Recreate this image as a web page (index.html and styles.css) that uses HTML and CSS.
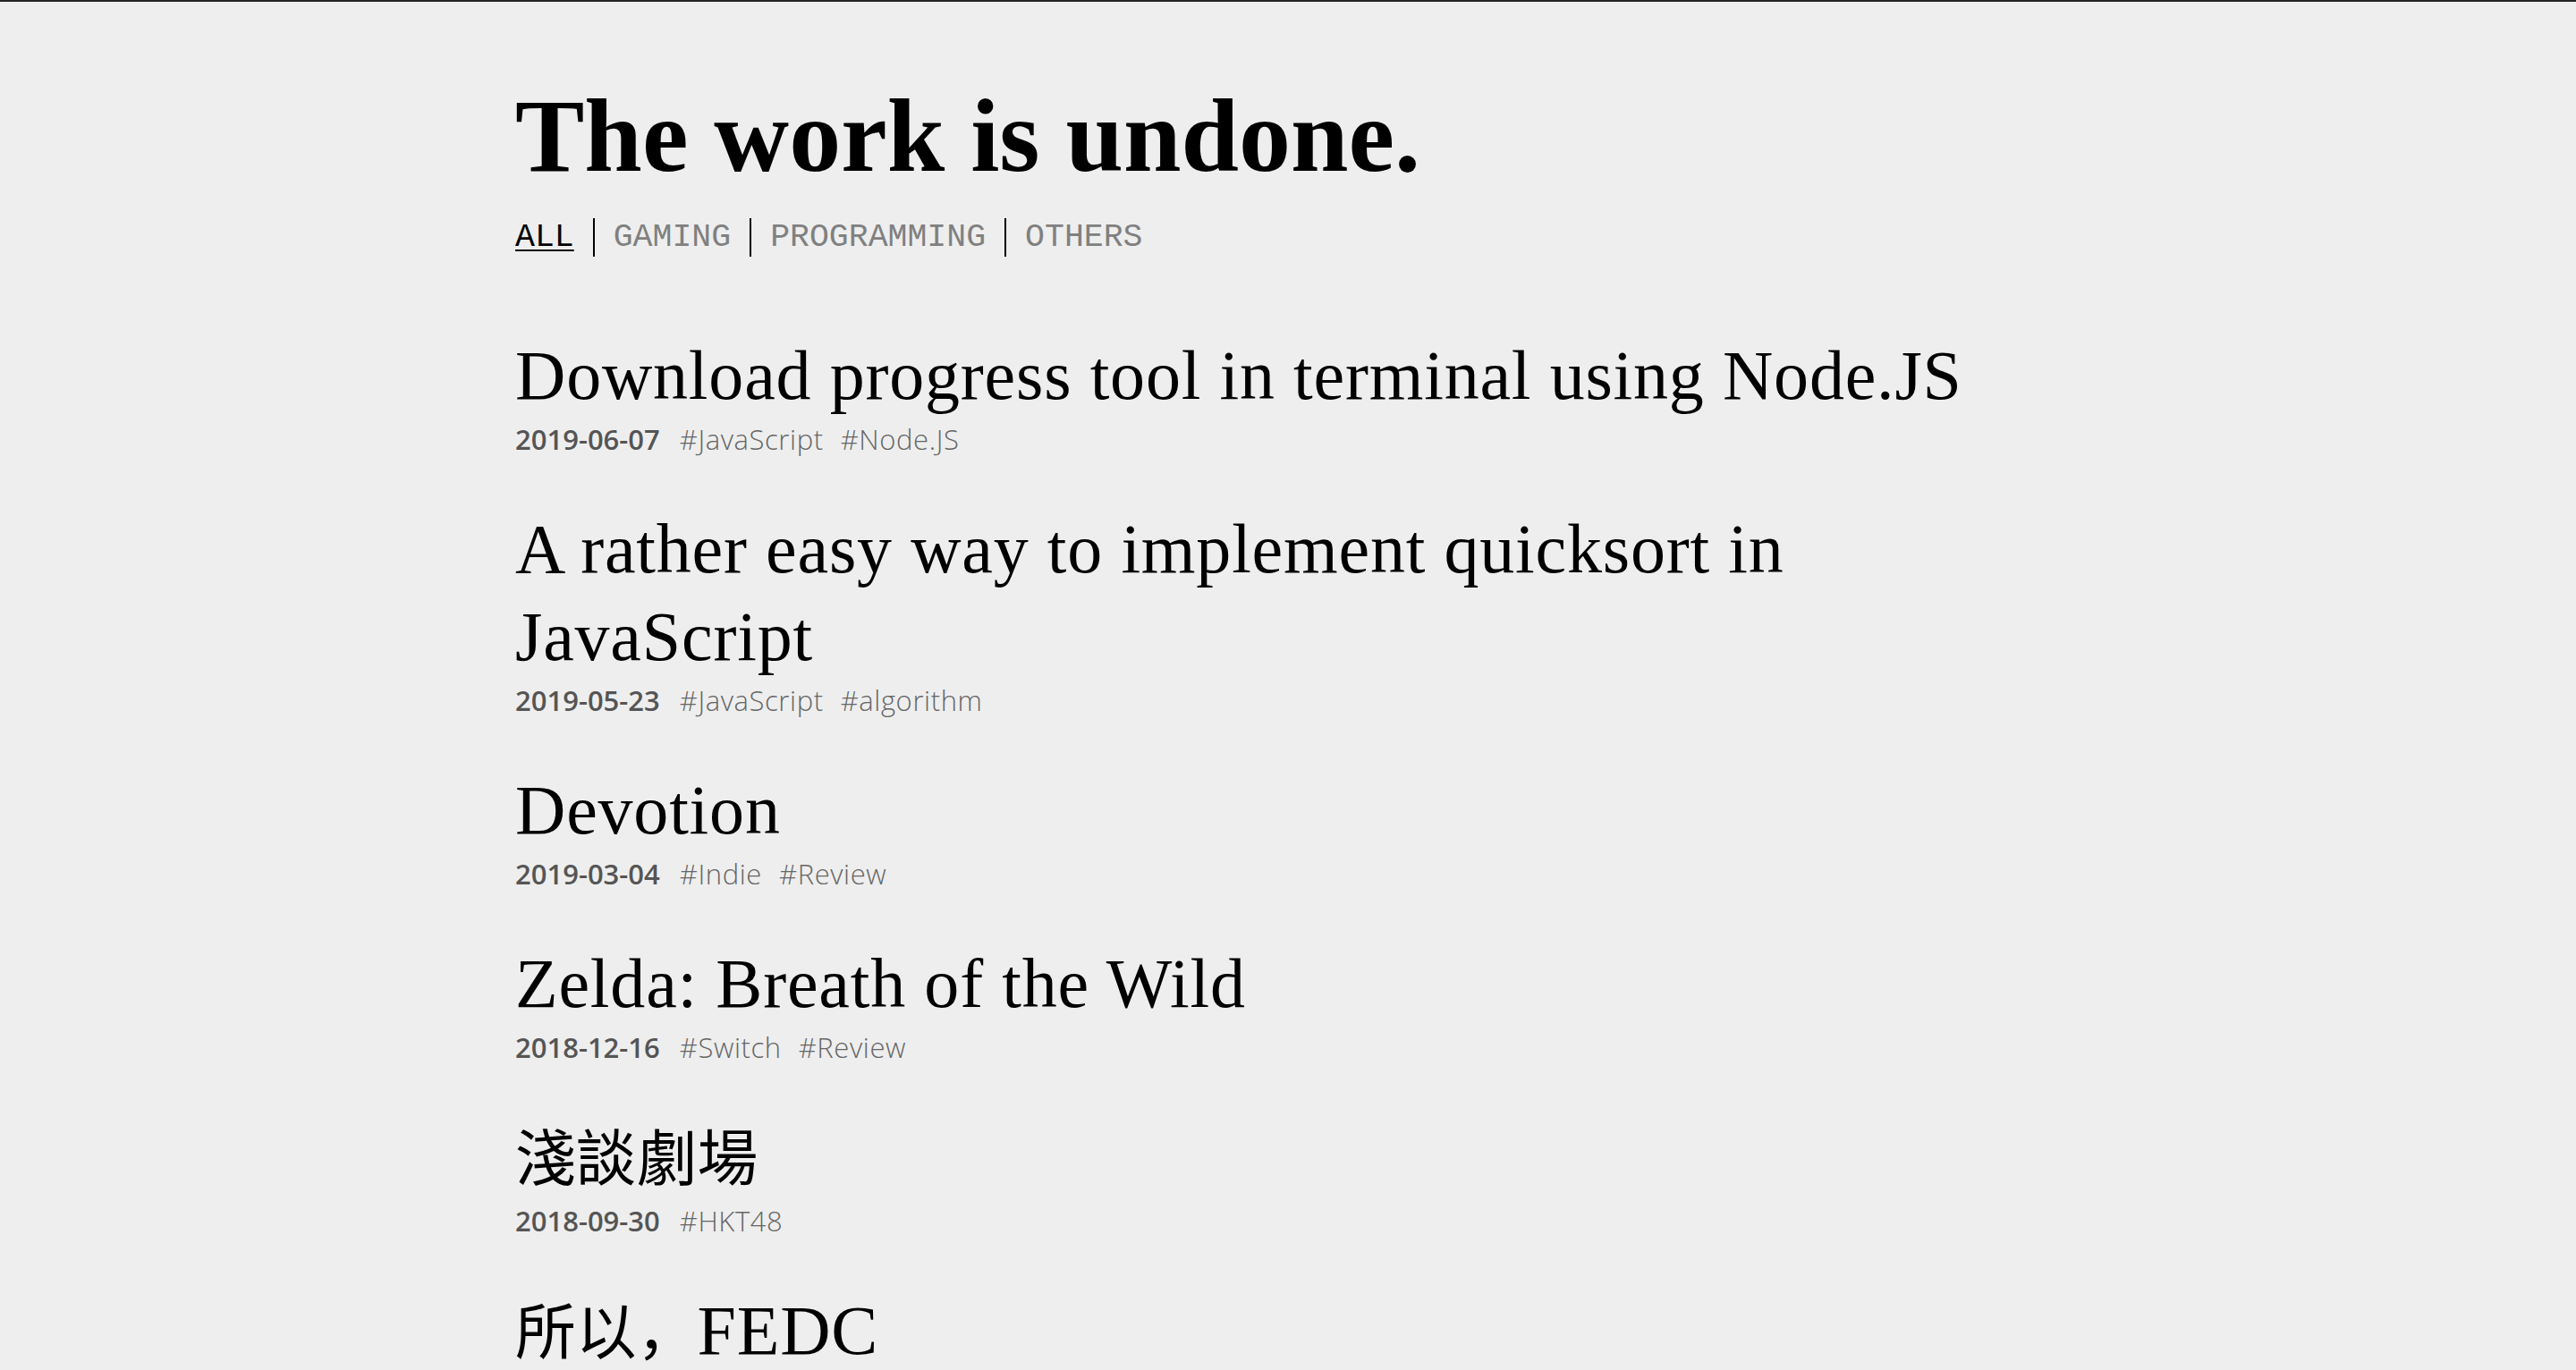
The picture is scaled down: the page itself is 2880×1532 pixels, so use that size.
FILE: index.html
```html
<!DOCTYPE html>
<html lang="en">
<head>
<meta charset="utf-8">
<title>The work is undone.</title>
<link rel="stylesheet" href="styles.css">
</head>
<body>
<div class="page">
  <header class="header">
    <h1 class="site-title">The work is undone.</h1>
    <nav class="nav">
      <a class="nav-item active" href="#">ALL</a><a class="nav-item" href="#">GAMING</a><a class="nav-item" href="#">PROGRAMMING</a><a class="nav-item" href="#">OTHERS</a>
    </nav>
  </header>
  <main class="posts">
    <article class="post">
      <h2 class="post-title">Download progress tool in terminal using Node.JS</h2>
      <div class="meta"><span class="date">2019-06-07</span><span class="tag">#JavaScript</span><span class="tag">#Node.JS</span></div>
    </article>
    <article class="post">
      <h2 class="post-title">A rather easy way to implement quicksort in JavaScript</h2>
      <div class="meta"><span class="date">2019-05-23</span><span class="tag">#JavaScript</span><span class="tag">#algorithm</span></div>
    </article>
    <article class="post">
      <h2 class="post-title">Devotion</h2>
      <div class="meta"><span class="date">2019-03-04</span><span class="tag">#Indie</span><span class="tag">#Review</span></div>
    </article>
    <article class="post">
      <h2 class="post-title">Zelda: Breath of the Wild</h2>
      <div class="meta"><span class="date">2018-12-16</span><span class="tag">#Switch</span><span class="tag">#Review</span></div>
    </article>
    <article class="post">
      <h2 class="post-title"><span class="cjk" lang="zh-Hant">淺談劇場</span></h2>
      <div class="meta"><span class="date">2018-09-30</span><span class="tag">#HKT48</span></div>
    </article>
    <article class="post">
      <h2 class="post-title"><span class="cjk" lang="zh-Hans">所以，</span>FEDC</h2>
      <div class="meta"><span class="date">2018-08-11</span><span class="tag">#HKT48</span></div>
    </article>
  </main>
</div>
</body>
</html>
```
FILE: styles.css
```css
html, body {
  margin: 0;
  padding: 0;
  background: #eeeeee;
}

body {
  border-top: 2px solid #232323;
  color: #000;
  font-family: "Liberation Serif", "Noto Sans CJK SC", serif;
}

.page {
  width: 60%;
  margin: 0 auto;
}

.header {
  padding-top: 81px;
}

.site-title {
  margin: 0;
  font-family: "Liberation Serif", serif;
  font-weight: 700;
  font-size: 116px;
  line-height: 139px;
  color: #000;
}

.nav {
  margin-top: 22px;
  display: flex;
  font-family: "Liberation Mono", "Courier New", monospace;
  font-size: 36.5px;
  line-height: 43px;
}

.nav-item {
  padding: 0 21px;
  border-left: 2px solid #000;
  color: #808080;
  text-decoration: none;
}

.nav-item:first-child {
  padding-left: 0;
  border-left: none;
}

.nav-item.active {
  color: #000;
  text-decoration: underline;
  text-decoration-thickness: 2px;
  text-underline-offset: 4px;
}

.posts {
  margin-top: 84px;
}

.post {
  margin-bottom: 52px;
}

.post-title {
  margin: 0;
  font-family: "Liberation Serif", "Noto Sans CJK SC", serif;
  font-weight: 400;
  font-size: 78px;
  line-height: 98px;
  letter-spacing: 0.8px;
  color: #000;
}

.cjk {
  font-family: "Noto Sans CJK SC", sans-serif;
  font-size: 0.87em;
  font-weight: 400;
  line-height: 1;
  letter-spacing: 0;
}

.meta {
  font-family: "Open Sans", "Noto Sans", sans-serif;
  font-size: 31px;
  line-height: 44px;
  color: #555;
}

.date {
  font-weight: 600;
  color: #555;
  margin-right: 3px;
}

.tag {
  font-weight: 300;
  color: #666;
  margin-left: 19px;
  letter-spacing: 0.6px;
}
```
